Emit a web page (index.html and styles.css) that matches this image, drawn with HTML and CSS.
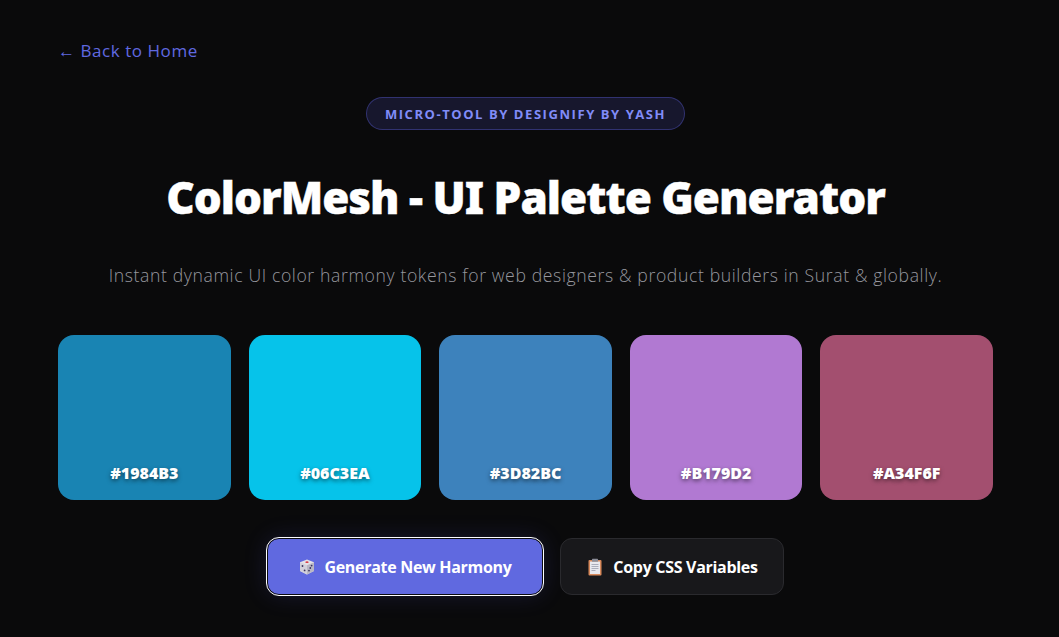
FILE: index.html
```html
<!DOCTYPE html>
<html lang="en">
<head>
<meta charset="utf-8">
<title>ColorMesh - UI Palette Generator</title>
<link rel="stylesheet" href="styles.css">
</head>
<body>
<main class="page">
  <a class="back" href="#">← Back to Home</a>
  <header class="hero">
    <span class="badge">MICRO-TOOL BY DESIGNIFY BY YASH</span>
    <h1 class="title">ColorMesh - UI Palette Generator</h1>
    <p class="subtitle">Instant dynamic UI color harmony tokens for web designers &amp; product builders in Surat &amp; globally.</p>
  </header>
  <section class="swatches">
    <div class="swatch" style="background:#1984B3"><span class="hex">#1984B3</span></div>
    <div class="swatch" style="background:#06C3EA"><span class="hex">#06C3EA</span></div>
    <div class="swatch" style="background:#3D82BC"><span class="hex">#3D82BC</span></div>
    <div class="swatch" style="background:#B179D2"><span class="hex">#B179D2</span></div>
    <div class="swatch" style="background:#A34F6F"><span class="hex">#A34F6F</span></div>
  </section>
  <div class="actions">
    <button class="btn btn-primary">
      <svg class="icon" viewBox="0 0 18 18" aria-hidden="true">
        <path d="M9 1.5 16 4.2V13L9 16.5 2 13V4.2Z" fill="#e4e2e6"/>
        <path d="M9 7.2V16.5L2 13V4.2Z" fill="#d2d0da"/>
        <path d="M9 7.2V16.5L16 13V4.2Z" fill="#b9b7c4"/>
        <ellipse cx="9" cy="4.2" rx="1.6" ry=".9" fill="#d8404a"/>
        <circle cx="4.5" cy="8" r=".9" fill="#3a3560"/><circle cx="6.6" cy="12.4" r=".9" fill="#3a3560"/>
        <circle cx="13.6" cy="7.6" r=".9" fill="#3a3560"/><circle cx="12.3" cy="10" r=".9" fill="#3a3560"/><circle cx="11" cy="12.6" r=".9" fill="#3a3560"/>
      </svg>
      Generate New Harmony
    </button>
    <button class="btn btn-secondary">
      <svg class="icon" viewBox="0 0 18 18" aria-hidden="true">
        <rect x="2.5" y="2" width="13" height="15.5" rx="1" fill="#d98a5c"/>
        <rect x="4" y="3.5" width="10" height="12.5" fill="#e8e8ee"/>
        <rect x="6" y=".8" width="6" height="3" rx=".6" fill="#8b8d98"/>
        <path d="M5.5 6.5h7M5.5 8.5h7M5.5 10.5h7M5.5 12.5h4" stroke="#a3a6b4" stroke-width=".9"/>
      </svg>
      Copy CSS Variables
    </button>
  </div>
</main>
</body>
</html>
```

FILE: styles.css
```css
* { box-sizing: border-box; }
html, body { margin: 0; height: 100%; }
body {
  background: #0a0a0b;
  color: #fff;
  font-family: "Open Sans", "Noto Sans", sans-serif;
  overflow: hidden;
}
.page {
  display: flex;
  flex-direction: column;
  padding: 40px 66px 0 58px;
}
.back {
  align-self: flex-start;
  color: #6069e0;
  font-size: 17px;
  font-weight: 500;
  letter-spacing: .55px;
  line-height: 22px;
  text-decoration: none;
}
.hero {
  display: flex;
  flex-direction: column;
  align-items: center;
  margin-top: 35px;
}
.badge {
  height: 33px;
  padding: 0 18px;
  display: flex;
  align-items: center;
  border: 1px solid rgba(99,102,241,.35);
  border-radius: 17px;
  background: rgba(99,102,241,.15);
  color: #818cf8;
  font-size: 13px;
  font-weight: 700;
  letter-spacing: 1.56px;
}
.title {
  margin: 41px 0 0;
  font-family: "Noto Sans", "Open Sans", sans-serif;
  font-size: 44px;
  font-weight: 900;
  line-height: 52px;
  letter-spacing: -1px;
  text-align: center;
  -webkit-text-stroke: .4px #fff;
}
.subtitle {
  margin: 40px 0 0;
  color: #96979e;
  font-size: 17.6px;
  font-weight: 300;
  line-height: 24px;
  letter-spacing: .62px;
  text-align: center;
}
.swatches {
  display: grid;
  grid-template-columns: repeat(5, 1fr);
  gap: 18px;
  margin-top: 48px;
}
.swatch {
  height: 165px;
  border-radius: 16px;
  display: flex;
  align-items: flex-end;
  justify-content: center;
  padding-bottom: 16px;
}
.hex {
  font-size: 16px;
  font-weight: 800;
  line-height: 22px;
  text-shadow: 0 2px 4px rgba(0,0,0,.5);
}
.actions {
  display: flex;
  justify-content: center;
  gap: 17px;
  margin-top: 38px;
}
.btn {
  height: 57px;
  display: flex;
  align-items: center;
  justify-content: center;
  gap: 8px;
  border-radius: 12px;
  color: #fff;
  font-family: inherit;
  font-size: 16px;
  font-weight: 700;
  letter-spacing: -.3px;
  white-space: nowrap;
  padding: 0 20px;
}
.icon { width: 18px; height: 18px; flex: none; }
.btn-primary {
  width: 276px;
  background: #6069e0;
  border: 1px solid #0b0b10;
  outline: 1.5px solid #fff;
  box-shadow: 0 0 24px rgba(99,102,241,.16);
}
.btn-secondary {
  width: 224px;
  gap: 9px;
  background: #18181b;
  border: 1px solid #2a2a2e;
}
```
